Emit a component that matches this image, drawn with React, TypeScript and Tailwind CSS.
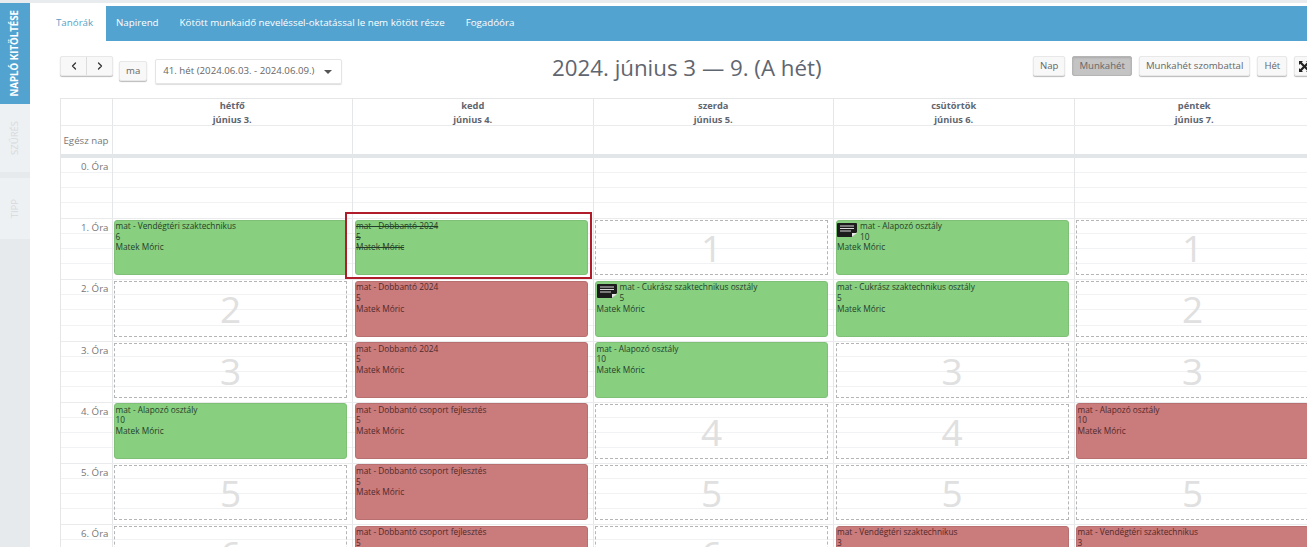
import React from "react";
import { ChevronLeft, ChevronRight } from "lucide-react";

type Lesson = {
  title: string;
  count: number;
  color: "green" | "red";
  note?: boolean;
  struck?: boolean;
};

const tabs = ["Napirend", "Kötött munkaidő neveléssel-oktatással le nem kötött része", "Fogadóóra"];

const days = [
  ["hétfő", "június 3."],
  ["kedd", "június 4."],
  ["szerda", "június 5."],
  ["csütörtök", "június 6."],
  ["péntek", "június 7."],
];

const vendeg = "mat - Vendégtéri szaktechnikus";
const dobbanto = "mat - Dobbantó 2024";
const csoport = "mat - Dobbantó csoport fejlesztés";
const alapozo = "mat - Alapozó osztály";
const cukrasz = "mat - Cukrász szaktechnikus osztály";

// one row per lesson, null = free slot
const rows: (Lesson | null)[][] = [
  [
    { title: vendeg, count: 6, color: "green" },
    { title: dobbanto, count: 5, color: "green", struck: true },
    null,
    { title: alapozo, count: 10, color: "green", note: true },
    null,
  ],
  [
    null,
    { title: dobbanto, count: 5, color: "red" },
    { title: cukrasz, count: 5, color: "green", note: true },
    { title: cukrasz, count: 5, color: "green" },
    null,
  ],
  [
    null,
    { title: dobbanto, count: 5, color: "red" },
    { title: alapozo, count: 10, color: "green" },
    null,
    null,
  ],
  [
    { title: alapozo, count: 10, color: "green" },
    { title: csoport, count: 5, color: "red" },
    null,
    null,
    { title: alapozo, count: 10, color: "red" },
  ],
  [
    null,
    { title: csoport, count: 5, color: "red" },
    null,
    null,
    null,
  ],
  [
    null,
    { title: csoport, count: 5, color: "red" },
    null,
    { title: vendeg, count: 3, color: "red" },
    { title: vendeg, count: 3, color: "red" },
  ],
];

const SubLines = () => (
  <div className="absolute inset-0 grid grid-rows-4">
    <div className="border-b border-[#f0f2f3]" />
    <div className="border-b border-[#f0f2f3]" />
    <div className="border-b border-[#f0f2f3]" />
    <div />
  </div>
);

const NoteIcon = () => (
  <svg width="20" height="14" viewBox="0 0 20 14" className="float-left mr-[3px] mt-[2px]">
    <path d="M1 0h18a1 1 0 0 1 1 1v8l-5 5H1a1 1 0 0 1-1-1V1a1 1 0 0 1 1-1z" fill="#1c1c1c" />
    <path d="M3 3h14M3 5.5h14M3 8h11" stroke="#d8d8d8" strokeWidth="1" />
    <path d="M15 14v-4h5z" fill="#e8e8e8" />
  </svg>
);

const LessonCard = ({ lesson }: { lesson: Lesson }) => (
  <div
    className={`absolute left-[1.5px] right-[5px] top-[0.5px] bottom-[4px] rounded-[3px] pl-[0.5px] pt-[0.5px] text-[8.3px] leading-[10.6px] ${
      lesson.color === "green"
        ? "bg-[#88cf80] border border-[#7fc077] text-[#24402a]"
        : "bg-[#ca7b7b] border border-[#b86f6f] text-[#4f2a2c]"
    } ${lesson.struck ? "line-through" : ""}`}
  >
    {lesson.note && <NoteIcon />}
    <div>{lesson.title}</div>
    <div>{lesson.count}</div>
    <div className="clear-both">Matek Móric</div>
  </div>
);

const FreeSlot = ({ n }: { n: number }) => (
  <div className="absolute left-[1.5px] right-[5px] top-[1px] bottom-[4px] flex items-center justify-center border border-dashed border-[#b5b5b5] text-[37px] leading-none text-[#e0e0e0]">
    {n}
  </div>
);

const Btn = ({ label, active }: { label: string; active?: boolean }) => (
  <button
    className={`h-[20px] whitespace-nowrap rounded-[2px] border px-[6px] text-[9.6px] leading-none text-[#666] ${
      active
        ? "border-[#b5b5b5] bg-[#c4c4c4] shadow-[inset_0_1px_2px_#aaa]"
        : "border-[#e8e8e8] bg-[#f8f8f8] shadow-[0_1px_1px_#bbb]"
    }`}
  >
    {label}
  </button>
);

export default function App() {
  return (
    <div className="relative flex h-[547px] w-[1307px] flex-col overflow-hidden bg-white font-['Open_Sans',sans-serif] text-[#666]">
      <div className="h-[3px] shrink-0 bg-[#e8ecef]" />

      <div className="flex min-h-0 flex-1">
        {/* side tabs */}
        <aside className="flex w-[30px] shrink-0 flex-col bg-[#e6eaec]">
          <div className="flex h-[101px] items-center justify-center bg-[#52a3d0] pb-[1px]">
            <span className="rotate-180 whitespace-nowrap text-[9.7px] font-bold text-white [writing-mode:vertical-rl]">
              NAPLÓ KITÖLTÉSE
            </span>
          </div>
          <div className="flex h-[68px] items-center justify-center bg-[#eef1f3]">
            <span className="rotate-180 text-[9.5px] text-[#d6dadc] [writing-mode:vertical-rl]">SZŰRÉS</span>
          </div>
          <div className="mt-[6px] flex h-[61px] items-center justify-center bg-[#eef1f3]">
            <span className="rotate-180 text-[9.5px] text-[#d6dadc] [writing-mode:vertical-rl]">TIPP</span>
          </div>
        </aside>

        <main className="min-w-0 flex-1">
          {/* top tabs */}
          <div className="mt-[3px] flex h-[35px] items-center text-[9.75px]">
            <div className="flex h-full w-[76px] shrink-0 items-center pl-[26px] text-[#5b9fc5]">Tanórák</div>
            <nav className="flex h-full flex-1 items-center gap-[21px] bg-[#52a3d0] pl-[10px] text-white">
              {tabs.map((t) => (
                <span key={t} className="whitespace-nowrap">
                  {t}
                </span>
              ))}
            </nav>
          </div>

          {/* toolbar */}
          <div className="relative ml-[30px] mt-[15px] flex h-[42px] items-start">
            <div className="flex h-[20px] w-[53px] rounded-[2px] border border-[#e8e8e8] bg-[#f8f8f8] shadow-[0_1px_1px_#bbb]">
              <span className="flex flex-1 items-center justify-center border-r border-[#ddd] text-[#333]">
                <ChevronLeft size={12} strokeWidth={2.5} />
              </span>
              <span className="flex flex-1 items-center justify-center text-[#333]">
                <ChevronRight size={12} strokeWidth={2.5} />
              </span>
            </div>
            <div className="ml-[6px]">
              <Btn label="ma" />
            </div>
            <div className="ml-[8px] mt-[3px] flex h-[25px] w-[187px] items-center justify-between rounded-[2px] border border-[#e5e5e5] pl-[7px] pr-[9px] text-[9.7px] shadow-[0_1px_1px_#ddd]">
              <span className="whitespace-nowrap">41. hét (2024.06.03. - 2024.06.09.)</span>
              <span className="h-0 w-0 border-x-[4px] border-t-[4px] border-x-transparent border-t-[#555]" />
            </div>
            <h1 className="absolute left-[492px] top-[-3px] whitespace-nowrap text-[22.3px] leading-[30px] text-[#5f6670]">
              2024. június 3 — 9. (A hét)
            </h1>
            <div className="absolute left-[973px] flex gap-[7px]">
              <Btn label="Nap" />
              <Btn label="Munkahét" active />
              <Btn label="Munkahét szombattal" />
              <Btn label="Hét" />
              <button className="flex h-[20px] w-[20px] shrink-0 items-center justify-center rounded-[2px] border border-[#e8e8e8] bg-[#f8f8f8] text-[#222] shadow-[0_1px_1px_#bbb]">
                <svg width="11" height="11" viewBox="0 0 11 11" fill="#222">
                  <path d="M0 0h4L2.8 1.2 5.5 3.9 8.2 1.2 7 0h4v4L9.8 2.8 7.1 5.5l2.7 2.7L11 7v4H7l1.2-1.2-2.7-2.7-2.7 2.7L4 11H0V7l1.2 1.2 2.7-2.7-2.7-2.7L0 4z" />
                </svg>
              </button>
            </div>
          </div>

          {/* calendar */}
          <div className="ml-[30px] w-[1256px] border-l border-t border-[#e4e6e8]">
            <div className="flex h-[27px] border-b border-[#e9ebec]">
              <div className="w-[51.5px] shrink-0 border-r border-[#e4e6e8]" />
              {days.map(([d, date]) => (
                <div
                  key={d}
                  className="w-[240.5px] shrink-0 border-r border-[#e4e6e8] text-center text-[9.3px] font-bold leading-[14px] text-[#5f6670]"
                >
                  <div>{d}</div>
                  <div>{date}</div>
                </div>
              ))}
            </div>
            <div className="flex h-[32px] border-b-[4px] border-[#e2e6e8]">
              <div className="w-[51.5px] shrink-0 border-r border-[#e4e6e8] pr-[3px] pt-[9px] text-right text-[9.7px] leading-[12px] text-[#777]">
                Egész nap
              </div>
              {days.map(([d]) => (
                <div key={d} className="w-[240.5px] shrink-0 border-r border-[#e4e6e8]" />
              ))}
            </div>

            <HourRow hour={0} cells={[undefined, undefined, undefined, undefined, undefined]} />
            {rows.map((cells, i) => (
              <HourRow key={i} hour={i + 1} cells={cells} />
            ))}
          </div>
        </main>
      </div>

      {/* highlighted lesson */}
      <div className="absolute left-[345px] top-[212px] h-[67px] w-[247px] border-[2.5px] border-[#b01c2a]" />
    </div>
  );
}

function HourRow({ hour, cells }: { hour: number; cells: (Lesson | null | undefined)[] }) {
  return (
    <div className="flex h-[61.2px] border-b border-[#e9ebec]">
      <div className="relative w-[51.5px] shrink-0 border-r border-[#e4e6e8]">
        <SubLines />
        <div className="relative pr-[3px] pt-[2px] text-right text-[9.7px] leading-[13px] text-[#777]">{hour}. Óra</div>
      </div>
      {cells.map((c, i) => (
        <div key={i} className="relative w-[240.5px] shrink-0 border-r border-[#e4e6e8]">
          <SubLines />
          {c === null && <FreeSlot n={hour} />}
          {c && <LessonCard lesson={c} />}
        </div>
      ))}
    </div>
  );
}
